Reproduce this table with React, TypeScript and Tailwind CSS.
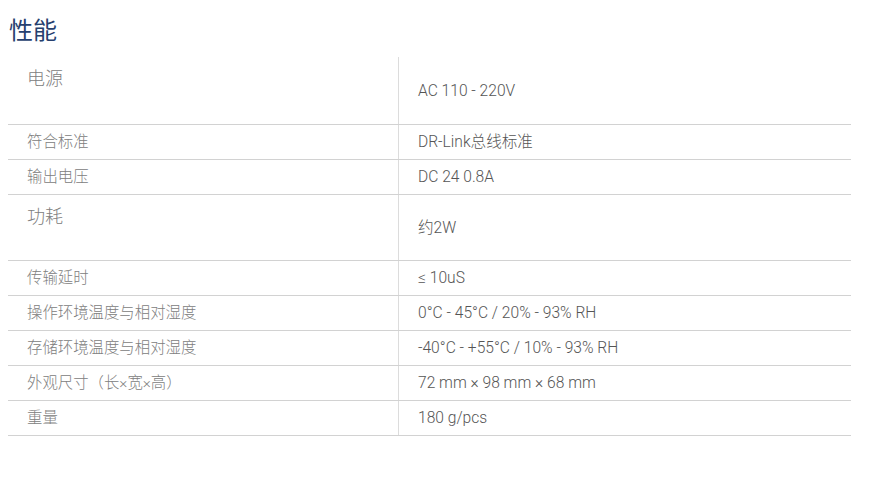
import React from "react";

const rows: { label: string; value: string; tall?: boolean; first?: boolean }[] = [
  { label: "电源", value: "AC 110 - 220V", tall: true, first: true },
  { label: "符合标准", value: "DR-Link总线标准" },
  { label: "输出电压", value: "DC 24 0.8A" },
  { label: "功耗", value: "约2W", tall: true },
  { label: "传输延时", value: "≤ 10uS" },
  { label: "操作环境温度与相对湿度", value: "0°C - 45°C / 20% - 93% RH" },
  { label: "存储环境温度与相对湿度", value: "-40°C - +55°C / 10% - 93% RH" },
  { label: "外观尺寸（长×宽×高）", value: "72 mm × 98 mm × 68 mm" },
  { label: "重量", value: "180 g/pcs" },
];

const font = { fontFamily: 'Roboto, "Noto Sans CJK SC", sans-serif' };

export default function App() {
  return (
    <div className="w-[875px] h-[477px] bg-white" style={font}>
      <div className="pl-[9px] pt-[15px] h-[57px]">
        <h2 className="text-[24px] leading-[32px] text-[#26406e] font-normal">性能</h2>
      </div>
      <div className="ml-[8px] w-[843px]">
        {rows.map((r, i) => (
          <div
            key={i}
            className={`flex border-b border-[#d2d2d2] ${r.first ? "h-[68px]" : r.tall ? "h-[66px]" : "h-[35px]"}`}
          >
            <div className="w-[391px] border-r border-[#dcdcdc] pl-[19px] flex">
              {r.tall ? (
                <div className="pt-[10px] text-[18px] leading-[24px] text-[#808080] font-light">
                  {r.label}
                </div>
              ) : (
                <div className="self-center text-[15.4px] leading-[20px] text-[#808080] font-light">
                  {r.label}
                </div>
              )}
            </div>
            <div className="flex-1 pl-[19px] flex items-center">
              <div className="text-[15.6px] leading-[20px] text-[#555] font-light">
                {r.value}
              </div>
            </div>
          </div>
        ))}
      </div>
    </div>
  );
}
